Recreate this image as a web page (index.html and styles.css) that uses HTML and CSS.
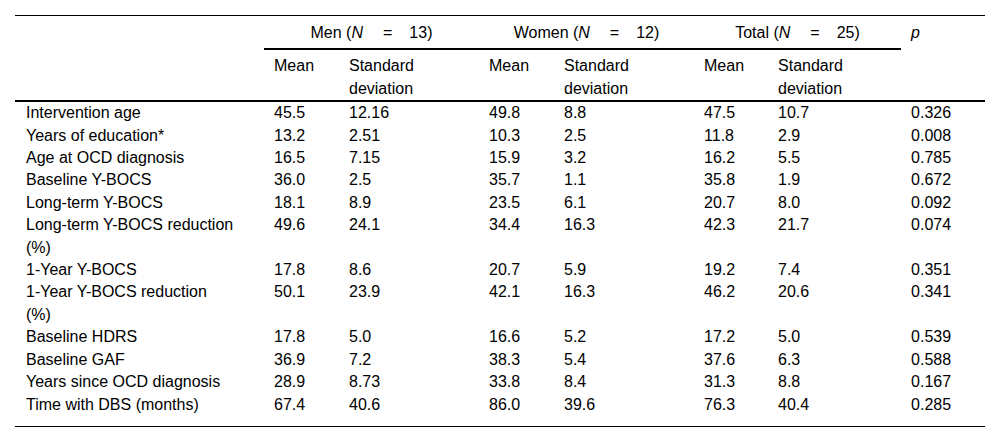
FILE: index.html
```html
<!DOCTYPE html>
<html lang="en">
<head>
<meta charset="utf-8">
<title>Table</title>
<link rel="stylesheet" href="styles.css">
</head>
<body>
<div class="wrap">
<table class="data">
  <colgroup>
    <col class="c-label">
    <col class="c-mean">
    <col class="c-sd">
    <col class="c-mean">
    <col class="c-sd2">
    <col class="c-mean2">
    <col class="c-sd3">
    <col class="c-p">
  </colgroup>
  <thead>
    <tr class="h1">
      <th rowspan="2" class="hlabel"></th>
      <th colspan="2" class="grp">Men (<i>N</i><span class="eq">=</span>13)</th>
      <th colspan="2" class="grp">Women (<i>N</i><span class="eq">=</span>12)</th>
      <th colspan="2" class="grp">Total (<i>N</i><span class="eq">=</span>25)</th>
      <th rowspan="2" class="hp"><i>p</i></th>
    </tr>
    <tr class="h2">
      <th>Mean</th><th>Standard deviation</th>
      <th>Mean</th><th>Standard deviation</th>
      <th>Mean</th><th>Standard deviation</th>
    </tr>
  </thead>
  <tbody>
    <tr><td class="lbl">Intervention age</td><td>45.5</td><td>12.16</td><td>49.8</td><td>8.8</td><td>47.5</td><td>10.7</td><td class="pv">0.326</td></tr>
    <tr><td class="lbl">Years of education*</td><td>13.2</td><td>2.51</td><td>10.3</td><td>2.5</td><td>11.8</td><td>2.9</td><td class="pv">0.008</td></tr>
    <tr><td class="lbl">Age at OCD diagnosis</td><td>16.5</td><td>7.15</td><td>15.9</td><td>3.2</td><td>16.2</td><td>5.5</td><td class="pv">0.785</td></tr>
    <tr><td class="lbl">Baseline Y-BOCS</td><td>36.0</td><td>2.5</td><td>35.7</td><td>1.1</td><td>35.8</td><td>1.9</td><td class="pv">0.672</td></tr>
    <tr><td class="lbl">Long-term Y-BOCS</td><td>18.1</td><td>8.9</td><td>23.5</td><td>6.1</td><td>20.7</td><td>8.0</td><td class="pv">0.092</td></tr>
    <tr><td class="lbl">Long-term Y-BOCS reduction<br>(%)</td><td>49.6</td><td>24.1</td><td>34.4</td><td>16.3</td><td>42.3</td><td>21.7</td><td class="pv">0.074</td></tr>
    <tr><td class="lbl">1-Year Y-BOCS</td><td>17.8</td><td>8.6</td><td>20.7</td><td>5.9</td><td>19.2</td><td>7.4</td><td class="pv">0.351</td></tr>
    <tr><td class="lbl">1-Year Y-BOCS reduction<br>(%)</td><td>50.1</td><td>23.9</td><td>42.1</td><td>16.3</td><td>46.2</td><td>20.6</td><td class="pv">0.341</td></tr>
    <tr><td class="lbl">Baseline HDRS</td><td>17.8</td><td>5.0</td><td>16.6</td><td>5.2</td><td>17.2</td><td>5.0</td><td class="pv">0.539</td></tr>
    <tr><td class="lbl">Baseline GAF</td><td>36.9</td><td>7.2</td><td>38.3</td><td>5.4</td><td>37.6</td><td>6.3</td><td class="pv">0.588</td></tr>
    <tr><td class="lbl">Years since OCD diagnosis</td><td>28.9</td><td>8.73</td><td>33.8</td><td>8.4</td><td>31.3</td><td>8.8</td><td class="pv">0.167</td></tr>
    <tr class="last"><td class="lbl">Time with DBS (months)</td><td>67.4</td><td>40.6</td><td>86.0</td><td>39.6</td><td>76.3</td><td>40.4</td><td class="pv">0.285</td></tr>
  </tbody>
</table>
</div>
</body>
</html>
```

FILE: styles.css
```css
html, body {
  margin: 0;
  padding: 0;
  background: #ffffff;
}

.wrap {
  padding: 15px 15px 0 15px;
}

.data {
  width: 970px;
  table-layout: fixed;
  border-collapse: separate;
  border-spacing: 0;
  border-top: 1px solid #000;
  border-bottom: 1px solid #000;
  font-family: "Liberation Sans", Arial, sans-serif;
  font-size: 16px;
  line-height: 22.4px;
  color: #000;
}

.c-label { width: 249px; }
.c-mean { width: 75px; }
.c-sd { width: 140px; }
.c-sd2 { width: 140px; }
.c-mean2 { width: 74px; }
.c-sd3 { width: 133px; }
.c-p { width: 84px; }

.data th,
.data td {
  font-weight: normal;
  text-align: left;
  vertical-align: top;
  padding: 0 10px;
}

.data .h1 th {
  padding-top: 6px;
  padding-bottom: 4px;
}

.data .h1 th.grp {
  text-align: center;
  border-bottom: 2px solid #000;
}

.data .h2 th {
  padding-top: 5px;
  padding-bottom: 0;
  border-bottom: 2px solid #000;
}

.data th.hlabel,
.data th.hp {
  border-bottom: 2px solid #000;
}

.data th.hp,
.data td.pv {
  padding-left: 10px;
}

.eq {
  margin: 0 17px 0 20px;
}

.data td.lbl {
  padding-left: 11px;
  padding-right: 20px;
}

.data tr.last td {
  padding-bottom: 10px;
}
```
